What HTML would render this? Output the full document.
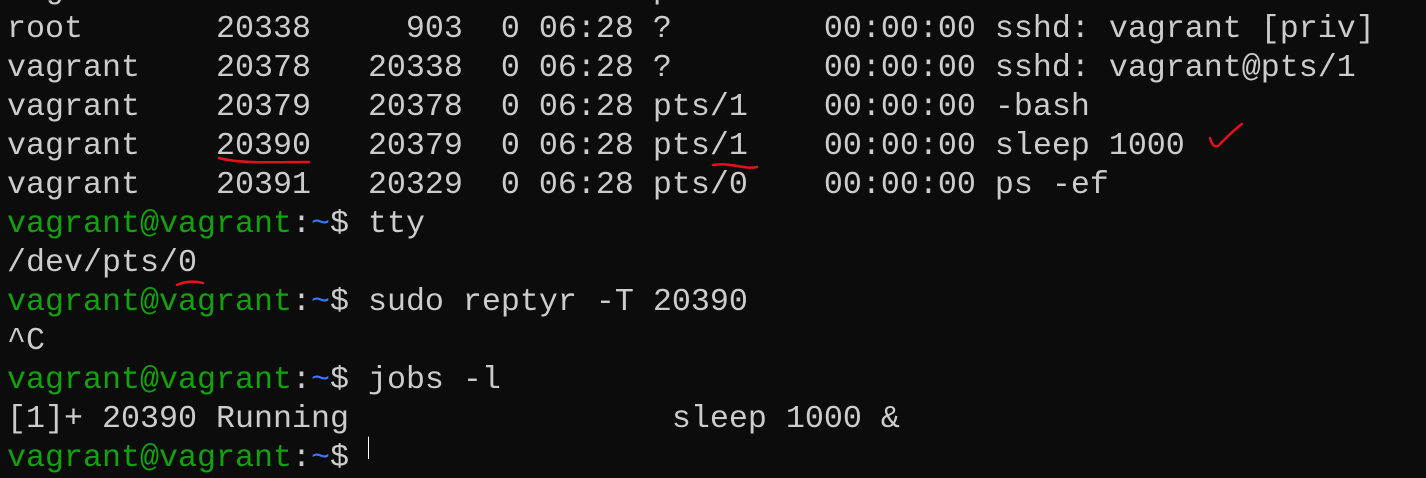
<!DOCTYPE html>
<html><head><meta charset="utf-8"><style>
html,body{margin:0;padding:0;background:#0c0c0c;width:1426px;height:459px;overflow:hidden}
pre{position:absolute;left:7px;top:-29px;margin:0;font-family:"Liberation Mono","DejaVu Sans Mono",monospace;font-size:31.67px;line-height:39px;color:#cccccc}
.g{color:#13a10e}.b{color:#3b78ff}
svg{position:absolute;left:0;top:0}
</style></head><body>
<pre>vagrant    20329   20328  0 06:25 pts/0    00:00:00 -bash
root       20338     903  0 06:28 ?        00:00:00 sshd: vagrant [priv]
vagrant    20378   20338  0 06:28 ?        00:00:00 sshd: vagrant@pts/1
vagrant    20379   20378  0 06:28 pts/1    00:00:00 -bash
vagrant    20390   20379  0 06:28 pts/1    00:00:00 sleep 1000
vagrant    20391   20329  0 06:28 pts/0    00:00:00 ps -ef
<span class="g">vagrant@vagrant</span>:<span class="b">~</span>$ tty
/dev/pts/0
<span class="g">vagrant@vagrant</span>:<span class="b">~</span>$ sudo reptyr -T 20390
^C
<span class="g">vagrant@vagrant</span>:<span class="b">~</span>$ jobs -l
[1]+ 20390 Running                 sleep 1000 &amp;
<span class="g">vagrant@vagrant</span>:<span class="b">~</span>$ </pre>
<svg width="1426" height="459" fill="none" stroke="#e8101a" stroke-width="2.5" stroke-linecap="round">
<path d="M219 158 C240 164 280 162 309 162"/>
<path d="M713 165 C730 162 745 170 757 167"/>
<path d="M1210 138 C1212 146 1216 149 1220 144 C1228 136 1236 128 1242 124"/>
<path d="M177 285 C185 281 195 281 203 283"/>
<path d="M368.5 437 V459" stroke="#ffffff" stroke-width="1"/>
</svg>
</body></html>
